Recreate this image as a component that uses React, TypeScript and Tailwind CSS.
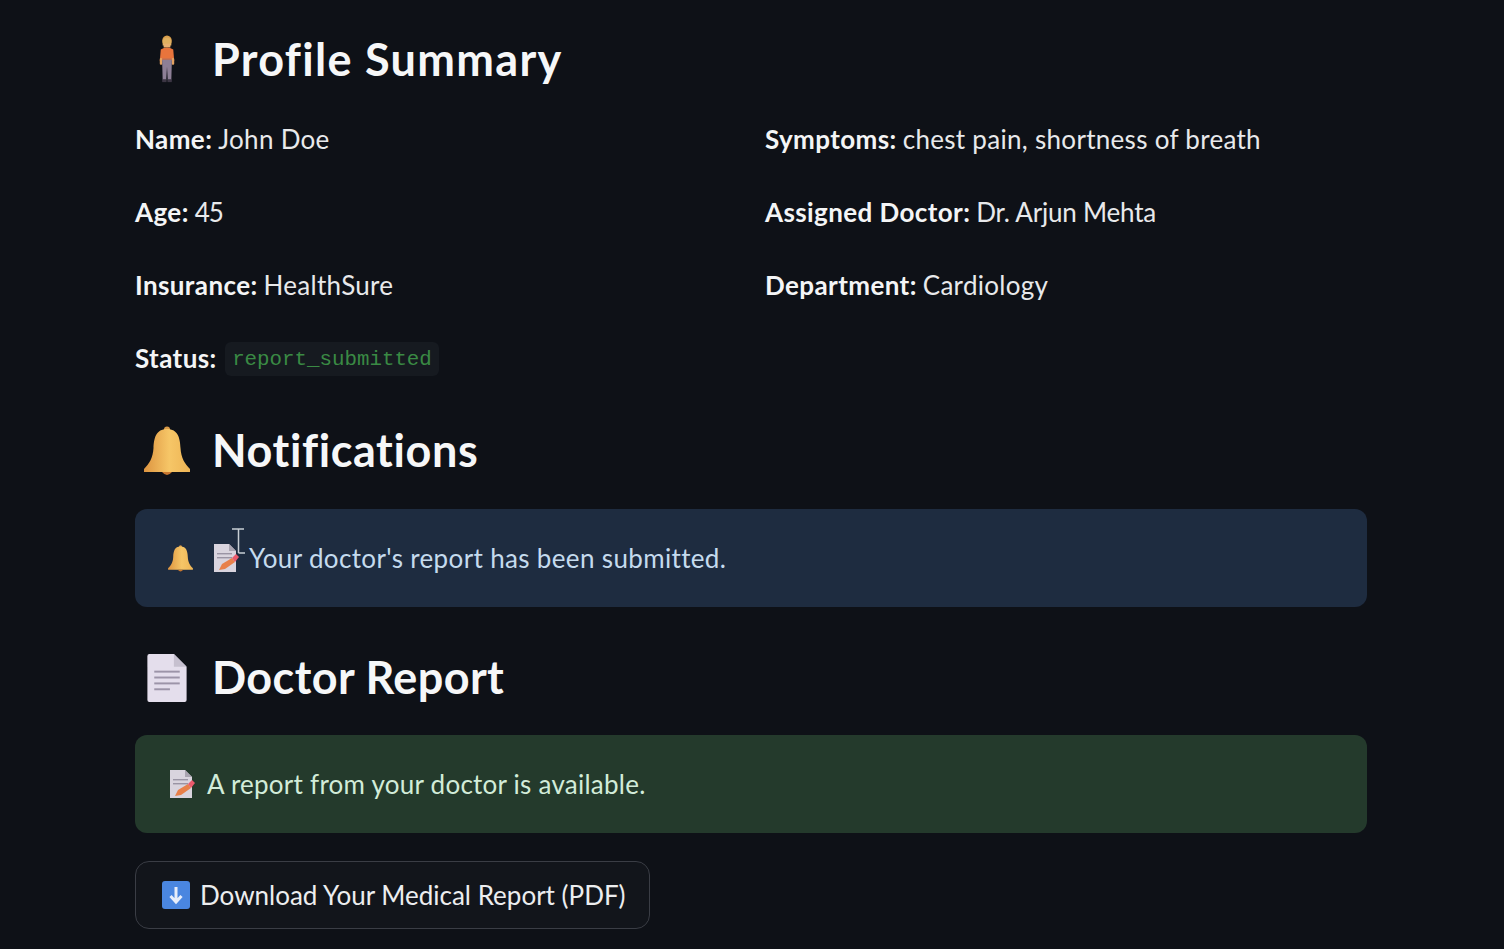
const SANS = "font-['Lato','Noto_Sans',sans-serif]";

function IconoPersona({ className }: { className?: string }) {
  return (
    <svg viewBox="0 0 20 52" className={className}>
      <ellipse cx="10" cy="6" rx="5" ry="5.6" fill="#d9a04e" />
      <path d="M5.500 7 C5.500 1 14.500 1 14.500 7 L14.500 11 L5.500 11 Z" fill="#e0b060" />
      <rect x="6.500" y="9" width="7" height="4" fill="#e8b070" />
      <path d="M3.500 15 Q10 11 16.500 15 L17.500 27 L15 27 L15 26 L5 26 L5 27 L2.500 27 Z" fill="#e8743c" />
      <rect x="2.500" y="24" width="2.600" height="7" rx="1" fill="#e3a260" />
      <rect x="14.900" y="24" width="2.600" height="7" rx="1" fill="#e3a260" />
      <rect x="5" y="24.500" width="10" height="2" fill="#b8705a" />
      <path d="M5 26 L15 26 L15 29 L14.500 47 L10.800 47 L10 33 L9.200 47 L5.500 47 L5 29 Z" fill="#8d7f96" />
      <rect x="5" y="46" width="4.500" height="3" fill="#3c3644" />
      <rect x="10.500" y="46" width="4.500" height="3" fill="#3c3644" />
    </svg>
  );
}

function IconoCampana({ className, id }: { className?: string; id: string }) {
  return (
    <svg viewBox="0 0 48 50" className={className}>
      <defs>
        <linearGradient id={id} x1="0" x2="1" y1="0" y2="0">
          <stop offset="0" stopColor="#dd9440" />
          <stop offset="0.55" stopColor="#f6c667" />
          <stop offset="1" stopColor="#eeb555" />
        </linearGradient>
      </defs>
      <circle cx="24" cy="3.500" r="3" fill="#d99a48" />
      <path d="M24 3 C13 3 11 12 10.500 22 C10 32 6 38 1 43 L1 46 L47 46 L47 43 C42 38 38 32 37.500 22 C37 12 35 3 24 3 Z" fill={`url(#${id})`} />
      <path d="M19 46 Q24 52 29 46 Z" fill="#c9772f" />
    </svg>
  );
}

function IconoHoja({ className }: { className?: string }) {
  return (
    <svg viewBox="0 0 40 50" className={className}>
      <path d="M2 0 L27 0 L40 13 L40 47 Q40 49 38 49 L2 49 Q0 49 0 47 L0 2 Q0 0 2 0 Z" fill="#e4deec" />
      <path d="M27 0 L40 13 L27 13 Z" fill="#c6c0cf" />
      <rect x="7" y="17" width="26" height="2" fill="#9c94a8" />
      <rect x="7" y="23" width="26" height="2" fill="#9c94a8" />
      <rect x="7" y="29" width="26" height="2" fill="#9c94a8" />
      <rect x="7" y="35" width="16" height="2" fill="#9c94a8" />
    </svg>
  );
}

function IconoMemo({ className }: { className?: string }) {
  return (
    <svg viewBox="0 0 28 30" className={className}>
      <path d="M1 1 L16 1 L23 8 L23 29 L1 29 Z" fill="#d9d4de" />
      <path d="M16 1 L23 8 L16 8 Z" fill="#a9a4b0" />
      <rect x="4" y="10" width="15" height="1.400" fill="#9a94a4" />
      <rect x="4" y="14" width="15" height="1.400" fill="#9a94a4" />
      <path d="M6 27 L9 21 L19 15 L22 19 L12 26 Z" fill="#e8804a" />
      <path d="M19 15 L23 11 L26 14 L22 19 Z" fill="#ea5a6c" />
    </svg>
  );
}

function Titulo({ icono, texto, className }: { icono: React.ReactNode; texto: string; className: string }) {
  return (
    <h2 className={`flex h-[87px] items-center pt-[1px] text-[45px] font-bold text-[#f6f7f8] ${className}`}>
      <span className="flex w-[77px] justify-center pr-[13px]">{icono}</span>
      {texto}
    </h2>
  );
}

function Dato({ label, valor, className }: { label: string; valor: string; className?: string }) {
  return (
    <p className="flex h-[73px] items-center gap-[6px] text-[#e8e9eb]">
      <b className="font-bold tracking-[0.4px] text-[#f4f5f6]">{label}</b>
      <span className={className ?? "tracking-[0.3px]"}>{valor}</span>
    </p>
  );
}

export default function App() {
  return (
    <div className={`${SANS} relative h-[949px] overflow-hidden bg-[#0e1117] pl-[135px] pr-[137px] pt-[16px] text-[26px]`}>
      <Titulo className="tracking-[1.3px]" icono={<IconoPersona className="h-[50px] w-[20px]" />} texto="Profile Summary" />

      <div className="grid grid-cols-[630px_1fr]">
        <div>
          <Dato label="Name:" valor="John Doe" />
          <Dato label="Age:" valor="45" className="tracking-[-1px]" />
          <Dato label="Insurance:" valor="HealthSure" />
        </div>
        <div>
          <Dato label="Symptoms:" valor="chest pain, shortness of breath" />
          <Dato label="Assigned Doctor:" valor="Dr. Arjun Mehta" className="tracking-[-0.2px]" />
          <Dato label="Department:" valor="Cardiology" />
        </div>
      </div>

      <p className="flex h-[73px] items-center gap-[8px]">
        <b className="font-bold tracking-[0.4px] text-[#f4f5f6]">Status:</b>
        <code className="rounded-[6px] bg-[#161a20] px-[7.500px] pb-[2px] pt-[4px] font-['Liberation_Mono',monospace] text-[20.800px] leading-[28px] text-[#3a8a44]">
          report_submitted
        </code>
      </p>

      <div className="mt-[12px]">
        <Titulo className="tracking-[0.6px]" icono={<IconoCampana id="campana-titulo" className="h-[50px] w-[48px]" />} texto="Notifications" />
      </div>

      <div className="mt-[15px] flex h-[98px] items-center rounded-[12px] bg-[#1e2c40] pl-[32px] tracking-[0.35px] text-[#c5dbee]">
        <IconoCampana id="campana-alerta" className="h-[27px] w-[27px]" />
        <IconoMemo className="ml-[19px] mr-[8px] h-[30px] w-[28px]" />
        Your doctor's report has been submitted.
      </div>

      <div className="mt-[27px]">
        <Titulo className="tracking-[0.4px]" icono={<IconoHoja className="h-[49px] w-[40px]" />} texto="Doctor Report" />
      </div>

      <div className="mt-[14px] flex h-[98px] items-center rounded-[12px] bg-[#243a2c] pl-[34px] tracking-[0.25px] text-[#d2ecd9]">
        <IconoMemo className="mr-[10px] h-[30px] w-[28px]" />
        A report from your doctor is available.
      </div>

      <button className="mt-[28px] flex h-[68px] w-[515px] items-center rounded-[14px] border border-[#3a3d45] bg-[#12151b] pl-[26px] text-[#ecedef]">
        <svg viewBox="0 0 28 28" className="mr-[10px] h-[28px] w-[28px]">
          <rect width="28" height="28" rx="3" fill="#4a86e0" />
          <path d="M14 6 L14 20 M8.500 15 L14 21 L19.500 15" fill="none" stroke="#e8eefa" strokeWidth="3" />
        </svg>
        Download Your Medical Report (PDF)
      </button>

      {/* cursor de texto sobre la alerta */}
      <svg viewBox="0 0 15 26" className="absolute left-[231px] top-[528px] h-[26px] w-[15px]">
        <path d="M1 1 H13 M7.500 1 V25 M7.500 25 H14" fill="none" stroke="#c8ced4" strokeWidth="1.500" />
      </svg>
    </div>
  );
}
